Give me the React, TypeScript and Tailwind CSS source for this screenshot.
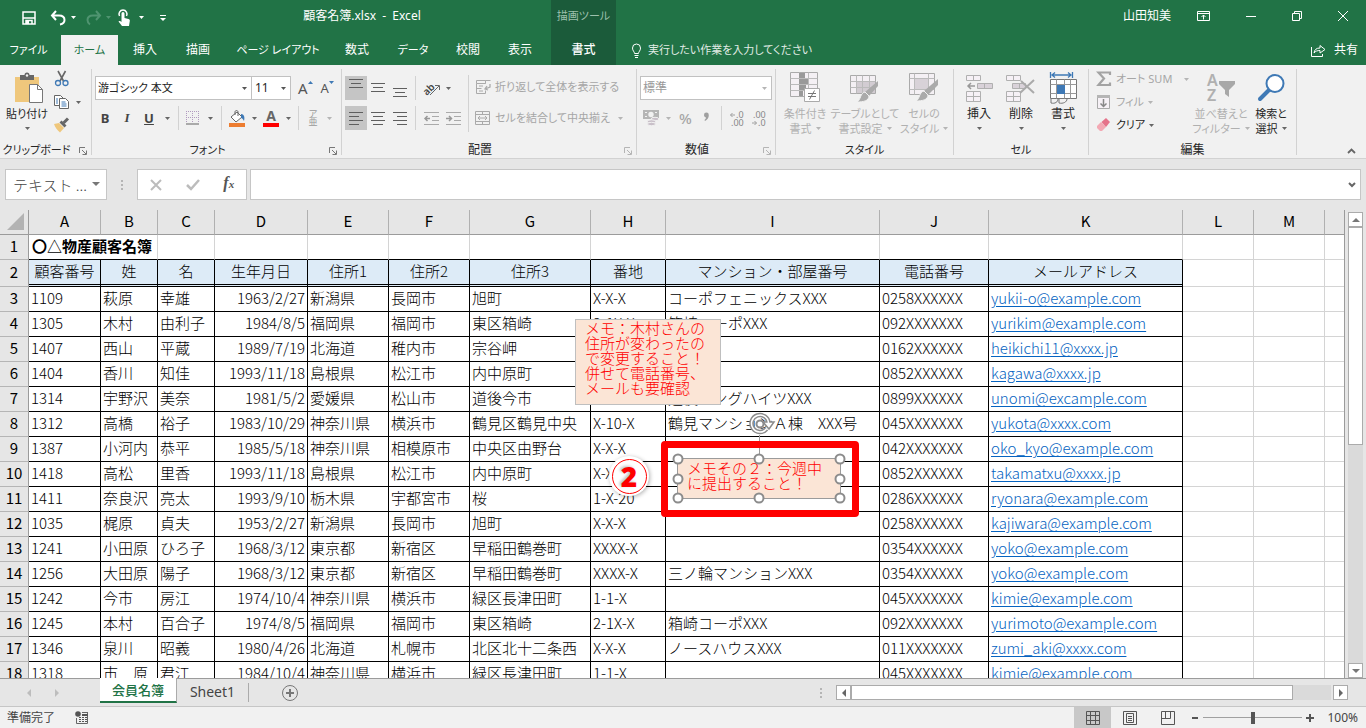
import React from 'react';

type IconProps = { w?: number; h?: number; children: React.ReactNode; className?: string };

function Icon({ w = 16, h = 16, children, className = '' }: IconProps) {
  return (
    <svg width={w} height={h} viewBox={`0 0 ${w} ${h}`} fill="none" aria-hidden="true" className={`shrink-0 overflow-visible ${className}`}>
      {children}
    </svg>
  );
}

function Arrow({ className = 'text-[#666666]' }: { className?: string }) {
  return (
    <Icon w={5} h={3} className={className}>
      <path d="M0 0h5L2.5 3z" fill="currentColor" />
    </Icon>
  );
}

function Launcher({ className }: { className: string }) {
  return (
    <button aria-label="オプション" className={`absolute right-1 bottom-0 ${className}`}>
      <Icon w={8} h={8}>
        <path d="M.5 6V.5H6M3 3l4 4M7.500 3.500v4h-4" stroke="currentColor" />
      </Icon>
    </button>
  );
}

type GroupProps = { label: string; className: string; labelSize?: string; launcher?: string; children: React.ReactNode };

function Group({ label, className, labelSize = 'text-[12px]', launcher, children }: GroupProps) {
  return (
    <section aria-label={label} className={`relative flex shrink-0 flex-col border-r border-[#d2d2d2] ${className}`}>
      <div className="flex min-h-0 flex-1">{children}</div>
      <div className={`flex h-[10px] items-center justify-center text-[#262626] ${labelSize}`}>{label}</div>
      {launcher && <Launcher className={launcher} />}
    </section>
  );
}

function Sep() {
  return <span className="mx-1 h-6 w-px shrink-0 bg-[#d2d2d2]" />;
}

type BigProps = { icon: React.ReactNode; lines: string[]; className: string; arrow?: string };

function BigButton({ icon, lines, className, arrow }: BigProps) {
  return (
    <button className={`flex shrink-0 flex-col items-center whitespace-nowrap ${className}`}>
      <span className="flex h-[37px] items-center">{icon}</span>
      {lines.map((line, i) => (
        <span key={line} className="flex h-[15px] items-center gap-1 leading-[15px]">
          {line}
          {i === 1 && <Arrow className={arrow} />}
        </span>
      ))}
      {lines.length === 1 && (
        <span className="flex h-[15px] items-center">
          <Arrow className={arrow} />
        </span>
      )}
    </button>
  );
}

function Lines({ d }: { d: string }) {
  return (
    <Icon w={16} h={18}>
      <path d={d} stroke="#5f5f5f" />
    </Icon>
  );
}

const TABS = [
  { name: 'ファイル', style: 'w-[61px] pr-1 text-[11px]' },
  { name: 'ホーム', style: 'w-[57px] bg-[#f1f1f1] text-[11px] text-[#217346]' },
  { name: '挿入', style: 'w-[54px] text-[12px]' },
  { name: '描画', style: 'w-[52px] text-[12px]' },
  { name: 'ページ レイアウト', style: 'w-[108px] text-[11px]' },
  { name: '数式', style: 'w-[50px] text-[12px]' },
  { name: 'データ', style: 'w-[62px] text-[11px]' },
  { name: '校閲', style: 'w-[48px] text-[12px]' },
  { name: '表示', style: 'w-[56px] text-[12px]' },
];

function Header() {
  return (
    <header className="grid shrink-0 grid-cols-[551px_65px_1fr] grid-rows-[35px_30px] bg-[#217346] text-white">
      <div className="flex items-center">
        <div className="flex w-[173px] items-center pl-[21px]">
          <button aria-label="上書き保存">
            <Icon>
              <path d="M2 2h12v12H2z" stroke="#fff" strokeWidth="1.500" />
              <path d="M2 8h12M5 14v-3.500h6V14" stroke="#fff" strokeWidth="1.500" />
              <path d="M5 11h3v3H5z" fill="#fff" />
            </Icon>
          </button>
          <button aria-label="元に戻す" className="ml-[13px] flex items-center gap-1">
            <Icon w={17}>
              <path d="M6 1L2 5.500L6 10M2.500 5.500H9c3.500 0 5.500 2 5.500 4.500S12.500 14 10 14.500" stroke="#fff" strokeWidth="2" />
            </Icon>
            <Arrow className="text-white" />
          </button>
          <button aria-label="やり直し" className="ml-[9px] flex items-center gap-1 text-[#4f9470]">
            <Icon w={17}>
              <path d="M11 1l4 4.500L11 10M14.500 5.500H8c-3.500 0-5.500 2-5.500 4.500s1 3.500 2.500 4.500" stroke="currentColor" strokeWidth="2" />
            </Icon>
            <Arrow className="text-[#4f9470]" />
          </button>
          <button aria-label="タッチ/マウス モードの切り替え" className="ml-[6px] flex items-center gap-[8px]">
            <Icon w={14} h={18}>
              <path d="M2.500 7A4 4 0 1 1 9.500 7" stroke="#fff" strokeWidth="1.500" />
              <path d="M4.500 4.500a1.500 1.500 0 0 1 3 0V9l4 1c1 .3 1.500 1 1.300 2l-.8 5H5L1.500 12.500c1-.8 2-.5 3 .5z" fill="#fff" />
            </Icon>
            <Arrow className="text-white" />
          </button>
          <button aria-label="クイック アクセスのカスタマイズ" className="ml-4">
            <Icon w={6} h={8}>
              <path d="M0 1.500h6" stroke="#fff" />
              <path d="M0 4h6L3 7z" fill="#fff" />
            </Icon>
          </button>
        </div>
        <h1 className="flex-1 pb-1 text-center text-[12px]">顧客名簿.xlsx&nbsp; -&nbsp; Excel</h1>
      </div>

      <div className="flex items-center justify-center bg-[#1b5b3a] pb-1 text-[11px] text-[#9dc0ad]">描画ツール</div>

      <div className="flex items-center justify-end pb-1">
        <span className="mr-[25px] text-[12px]">山田知美</span>
        <button aria-label="リボンの表示オプション" className="mr-[31px] w-4">
          <Icon>
            <path d="M1.500 3.500h12v9h-12zM1.500 5.500h12M7.500 11.500V7M5.500 9l2-2 2 2" stroke="#fff" />
          </Icon>
        </button>
        <button aria-label="最小化" className="mr-[30px] w-4">
          <Icon>
            <path d="M3 8.500h10" stroke="#fff" />
          </Icon>
        </button>
        <button aria-label="元に戻す(縮小)" className="mr-[30px] w-4">
          <Icon>
            <path d="M3.500 5.500h7v7h-7zM5.500 5.500v-2h7v7h-2" stroke="#fff" />
          </Icon>
        </button>
        <button aria-label="閉じる" className="mr-[15px] w-4">
          <Icon>
            <path d="M3 3l10 10M13 3L3 13" stroke="#fff" />
          </Icon>
        </button>
      </div>

      <nav className="flex">
        {TABS.map((tab) => (
          <button key={tab.name} className={`shrink-0 whitespace-nowrap ${tab.style}`}>
            {tab.name}
          </button>
        ))}
      </nav>
      <button className="bg-[#1b5b3a] text-[12px] font-medium">書式</button>
      <div className="flex items-center justify-between pr-2 pl-[14px]">
        <button className="flex items-center gap-[5px] text-[11px] text-[#e0ebe4]">
          <Icon w={13} h={15}>
            <path d="M4.500 10.500C4.500 8.500 2.500 8 2.500 5a4 4 0 0 1 8 0c0 3-2 3.500-2 5.500z" stroke="#fff" />
            <path d="M4.500 12.500h4M5 14.500h3" stroke="#fff" />
          </Icon>
          実行したい作業を入力してください
        </button>
        <button className="flex items-center gap-2 text-[12px]">
          <Icon>
            <path d="M1.500 5v9.500h11V12" stroke="#fff" />
            <path d="M4 11c.5-3.500 2.500-5 6-5V3.500L15 7.500l-5 3.500V8.500C7.500 8.500 5.500 9 4 11z" stroke="#fff" />
          </Icon>
          共有
        </button>
      </div>
    </header>
  );
}

function ClipboardGroup() {
  return (
    <Group label="クリップボード" className="w-[92px]" labelSize="pr-[18px] text-[11px]" launcher="text-[#777777]">
      <BigButton
        className="ml-[5px] w-11 text-[11px] text-[#262626]"
        lines={['貼り付け']}
        icon={
          <Icon w={30} h={32} className="ml-1">
            <path d="M1 5h24v25H1z" fill="#efc77c" />
            <path d="M6 3h4.500a2.500 2.500 0 0 1 5 0H20v5H6z" fill="#666" />
            <circle cx="13" cy="3.500" r="1.200" fill="#f1f1f1" />
            <path d="M15.500 12.500h8l5 5v13h-13z" fill="#fff" stroke="#777" />
            <path d="M23.500 12.500v5h5" stroke="#777" />
          </Icon>
        }
      />
      <div className="ml-[5px] flex flex-col gap-[7px] pt-[2px]">
        <button aria-label="切り取り">
          <Icon>
            <path d="M4 0l5.500 10M11.500 0L6 10" stroke="#666" strokeWidth="1.600" />
            <circle cx="4" cy="12" r="2.500" stroke="#3f79b5" strokeWidth="1.300" />
            <circle cx="11.500" cy="12" r="2.500" stroke="#3f79b5" strokeWidth="1.300" />
          </Icon>
        </button>
        <button aria-label="コピー" className="flex items-center gap-[6px]">
          <Icon>
            <path d="M.5 1.500h6l3 3v7h-9z" fill="#fff" stroke="#666" />
            <path d="M5.500 4.500h6l3 3v7h-9z" fill="#fff" stroke="#666" />
            <path d="M2 5h2M2 7h2M2 9h2M7.500 8h4M7.500 10h5M7.500 12h5" stroke="#3f79b5" />
          </Icon>
          <Arrow />
        </button>
        <button aria-label="書式のコピー/貼り付け">
          <Icon>
            <path d="M0 7l5-1 5 5-4 4.500C3 13 1 10 0 7z" fill="#efc77c" />
            <path d="M5.500 5.500l2-2 5 5-2 2z" fill="#666" />
            <path d="M9.500 6L14 1.500" stroke="#666" strokeWidth="3" />
          </Icon>
        </button>
      </div>
    </Group>
  );
}

function FontGroup() {
  const small = 'flex h-6 shrink-0 items-center justify-center';
  return (
    <Group label="フォント" className="w-[250px]" labelSize="pr-[18px] text-[11px]" launcher="text-[#777777]">
      <div className="flex flex-1 flex-col gap-[6px] pt-[7px] pl-[3px]">
        <div className="flex items-center">
          <label className="relative flex h-6 w-[157px] border border-[#c1c1c1] bg-white">
            <select aria-label="フォント" className="w-full appearance-none bg-transparent pl-[2px] text-[11px] text-[#262626]">
              <option>游ゴシック 本文</option>
            </select>
            <Arrow className="absolute top-[10px] right-1 text-[#555555]" />
          </label>
          <label className="relative -ml-px flex h-6 w-10 border border-[#c1c1c1] bg-white">
            <select aria-label="フォント サイズ" className="w-full appearance-none bg-transparent pl-[3px] text-[12px] text-[#262626]">
              <option>11</option>
            </select>
            <Arrow className="absolute top-[10px] right-1 text-[#555555]" />
          </label>
          <button aria-label="フォント サイズの拡大" className="ml-[7px] flex items-start text-[15px] leading-4 text-[#555555]">
            A
            <Icon w={5} h={4}>
              <path d="M0 4h5L2.500 1z" fill="#3f79b5" />
            </Icon>
          </button>
          <button aria-label="フォント サイズの縮小" className="ml-2 flex items-start text-[13px] leading-4 text-[#555555]">
            A
            <Icon w={5} h={4}>
              <path d="M0 1h5L2.500 4z" fill="#3f79b5" />
            </Icon>
          </button>
        </div>
        <div className="-ml-px flex items-center text-[13px] text-[#444444]">
          <button className={`${small} w-[22px] font-bold`}>B</button>
          <button className={`${small} w-[22px] font-['Liberation_Serif',serif] font-bold italic`}>I</button>
          <button className={`${small} w-[22px] font-bold underline`}>U</button>
          <button aria-label="下線" className={`${small} w-[14px]`}><Arrow /></button>
          <Sep />
          <button aria-label="罫線" className={`${small} w-5`}>
            <Icon w={14} h={14}>
              <path d="M.5 0v13M6.500 0v13M12.500 0v13M0 .5h13M0 6.500h13" stroke="#b19abf" strokeDasharray="1 1" />
              <path d="M0 13h13" stroke="#aaa" strokeWidth="2" />
            </Icon>
          </button>
          <button aria-label="罫線の種類" className={`${small} w-[14px]`}><Arrow /></button>
          <Sep />
          <button aria-label="塗りつぶしの色" className={`${small} w-[22px]`}>
            <Icon w={17} h={17}>
              <path d="M2 7l6-5 5 5-6 5z" fill="#fff" stroke="#666" />
              <path d="M6 5V2c0-2 3-2 3 0v4" stroke="#666" />
              <path d="M12 4c3 0 4 3 3 7-1-2-2-3-3-3z" fill="#3f79b5" />
              <path d="M0 13h16v4H0z" fill="#ed7d31" />
            </Icon>
          </button>
          <button aria-label="塗りつぶしの種類" className={`${small} w-3`}><Arrow /></button>
          <button aria-label="フォントの色" className={`${small} w-[22px]`}>
            <span className="flex h-[17px] w-4 items-center justify-center border-b-4 border-[#ff0000] text-[14px] leading-3 font-bold text-[#666666]">A</span>
          </button>
          <button aria-label="フォントの色の種類" className={`${small} w-3`}><Arrow /></button>
          <Sep />
          <button aria-label="ふりがな" className={`${small} w-5 flex-col text-[9px] leading-[8px] text-[#999999]`}>
            <span>ア</span>
            <span>亜</span>
          </button>
          <button aria-label="ふりがなの設定" className={`${small} w-3`}><Arrow className="text-[#b5b5b5]" /></button>
        </div>
      </div>
    </Group>
  );
}

function AlignGroup() {
  const cell = 'flex h-6 w-[22px] shrink-0 items-center justify-center';
  return (
    <Group label="配置" className="w-[295px]" labelSize="pr-[18px] text-[12px]" launcher="text-[#b5b5b5]">
      <div className="flex flex-col gap-[6px] pt-[7px] pl-[3px]">
        <div className="flex items-center">
          <button aria-label="上揃え" className={`${cell} bg-[#c5c5c5]`}><Lines d="M1 .5h14M3 4.500h10M1 8.500h14" /></button>
          <button aria-label="上下中央揃え" className={cell}><Lines d="M1 4.500h14M3 8.500h10M1 12.500h14" /></button>
          <button aria-label="下揃え" className={cell}><Lines d="M1 9.500h14M3 13.500h10M1 17.500h14" /></button>
          <Sep />
          <button aria-label="方向" className="flex items-center gap-1 pl-1">
            <Icon w={18} h={16}>
              <text x="-1" y="11" fontSize="10" fontWeight="600" fill="#444" transform="rotate(-45 7 9)">ab</text>
              <path d="M6 15L15 6M11 5.500h4.500V10" stroke="#666" />
            </Icon>
            <Arrow />
          </button>
        </div>
        <div className="flex items-center">
          <button aria-label="左揃え" className={`${cell} bg-[#c5c5c5]`}><Lines d="M1 3.500h14M1 7.500h10M1 11.500h14M1 15.500h10" /></button>
          <button aria-label="中央揃え" className={cell}><Lines d="M1 3.500h14M3 7.500h10M1 11.500h14M3 15.500h10" /></button>
          <button aria-label="右揃え" className={cell}><Lines d="M1 3.500h14M5 7.500h10M1 11.500h14M5 15.500h10" /></button>
          <Sep />
          <button aria-label="インデントを減らす" className={cell}>
            <Icon w={17}>
              <path d="M1 2.500h15M9 6.500h7M9 10.500h7M1 14.500h15" stroke="#aaa" />
              <path d="M7 8.500H2M4.500 6L2 8.500 4.500 11" stroke="#999" strokeWidth="1.500" />
            </Icon>
          </button>
          <button aria-label="インデントを増やす" className={cell}>
            <Icon w={17}>
              <path d="M1 2.500h15M9 6.500h7M9 10.500h7M1 14.500h15" stroke="#aaa" />
              <path d="M1 8.500h5M4 6l2.500 2.500L4 11" stroke="#999" strokeWidth="1.500" />
            </Icon>
          </button>
        </div>
      </div>
      <div className="mt-[6px] ml-1 flex flex-1 flex-col gap-[7px] self-start border-l border-[#d2d2d2] pb-[2px] pl-[6px] text-[11px] whitespace-nowrap text-[#a6a6a6]">
        <button className="flex h-6 items-center gap-1">
          <Icon>
            <path d="M1.500 1.500h9v3h-9zM1.500 4.500v10M1.500 14.500h9v-3M1.500 9.500h5M10.500 4.500v-3h5M4 7h4M4 12h4" stroke="#aaa" />
            <path d="M15 5v3l-5 2M12 7l-2 3 3 1" stroke="#aaa" strokeWidth="1.300" />
          </Icon>
          折り返して全体を表示する
        </button>
        <button className="flex h-6 items-center gap-1">
          <Icon>
            <path d="M.5 1.500h14v13H.5zM.5 4.500h14M.5 11.500h14M7.500 1.500v3M7.500 11.500v3M3 8h9M5 6L3 8l2 2M10 6l2 2-2 2" stroke="#aaa" />
          </Icon>
          セルを結合して中央揃え
          <Arrow className="ml-1 text-[#b5b5b5]" />
        </button>
      </div>
    </Group>
  );
}

function NumberGroup() {
  return (
    <Group label="数値" className="w-[139px]" labelSize="pr-[18px] text-[12px]" launcher="text-[#b5b5b5]">
      <div className="flex flex-1 flex-col gap-[6px] px-[3px] pt-[7px]">
        <label className="relative flex h-6 border border-[#c1c1c1] bg-white">
          <select aria-label="表示形式" className="w-full appearance-none bg-transparent pl-[2px] text-[12px] text-[#999999]">
            <option>標準</option>
          </select>
          <Arrow className="absolute top-[10px] right-1 text-[#b5b5b5]" />
        </label>
        <div className="flex h-6 items-center text-[#a6a6a6]">
          <button aria-label="通貨表示形式" className="ml-[3px] flex items-center gap-[6px]">
            <Icon w={17}>
              <path d="M0 0h16v9H0z" fill="#b5b5b5" />
              <circle cx="8" cy="4.500" r="2.700" fill="#f1f1f1" />
              <path d="M2 2h2v1H2zM12 2h2v1h-2zM2 6h2v1H2z" fill="#f1f1f1" />
              <ellipse cx="12" cy="9" rx="4" ry="1.700" fill="#c9c0c9" stroke="#f1f1f1" />
              <ellipse cx="8.500" cy="11.500" rx="4" ry="1.700" fill="#c9c0c9" stroke="#f1f1f1" />
              <ellipse cx="8.500" cy="14" rx="4" ry="1.700" fill="#c9c0c9" stroke="#f1f1f1" />
            </Icon>
            <Arrow className="text-[#b5b5b5]" />
          </button>
          <button className="ml-2 text-[15px] font-medium">%</button>
          <button aria-label="桁区切りスタイル" className="mr-2 ml-3">
            <Icon w={5} h={10}>
              <path d="M0 2a2.200 2.200 0 0 1 4.800 0C5 5 3 7 1 8l-.5-1C1.500 6 2 5.500 2 4.500 1 4.500 0 3.500 0 2z" fill="#a0a0a0" />
            </Icon>
          </button>
          <Sep />
          <button aria-label="小数点以下の表示桁数を増やす" className="ml-[3px]">
            <Icon w={16} h={16}>
              <path d="M6 5H1.500M3.500 3l-2 2 2 2" stroke="#a0a0a0" />
              <text x="7" y="8" fontSize="9" fill="#888">.0</text>
              <text x="2" y="16" fontSize="9" fill="#888">.00</text>
            </Icon>
          </button>
          <button aria-label="小数点以下の表示桁数を減らす" className="ml-[6px]">
            <Icon w={16} h={16}>
              <text x="2" y="8" fontSize="9" fill="#888">.00</text>
              <path d="M1 13h4.500M3.500 11l2 2-2 2" stroke="#a0a0a0" />
              <text x="7" y="16" fontSize="9" fill="#888">.0</text>
            </Icon>
          </button>
        </div>
      </div>
    </Group>
  );
}

function StyleGroup() {
  return (
    <Group label="スタイル" className="w-[178px]" labelSize="text-[11px]">
      <div className="flex text-[11px] text-[#b0b0b0]">
        <BigButton
          className="w-[58px]"
          lines={['条件付き', '書式']}
          arrow="text-[#b5b5b5]"
          icon={
            <Icon w={30} h={31}>
              <path d="M.5.5h27v24H.5z" fill="#f4f0f4" stroke="#aaa" />
              <path d="M.5 6.500h27M.5 12.500h27M.5 18.500h27M9.500.5v24M18.500.5v24" stroke="#bbb" />
              <path d="M9 1h6v5H9zM9 7h9v5H9zM9 13h7v5H9zM9 19h4v5H9z" fill="#999" />
              <path d="M14.500 16.500h15v13h-15z" fill="#fff" stroke="#aaa" />
              <path d="M18 21.500h8M18 24.500h8M24.500 18.500l-5 9" stroke="#777" />
            </Icon>
          }
        />
        <BigButton
          className="w-[62px]"
          lines={['テーブルとして', '書式設定']}
          arrow="text-[#b5b5b5]"
          icon={
            <Icon w={30} h={30}>
              <path d="M.5 2.500h25v18H.5z" fill="#f4f0f4" stroke="#aaa" />
              <path d="M7 8h18v12H7z" fill="#d2ccd2" />
              <path d="M.5 8.500h25M.5 14.500h25M6.500 2.500v18M12.500 2.500v18M19.500 2.500v18" stroke="#bbb" />
              <path d="M28 8v5l-9 10-4-4z" fill="#aaa" />
              <path d="M15 19l4 4c0 5-6 6-12 6 4-2 3-9 8-10z" fill="#aaa" stroke="#f1f1f1" />
            </Icon>
          }
        />
        <BigButton
          className="w-[56px]"
          lines={['セルの', 'スタイル']}
          arrow="text-[#b5b5b5]"
          icon={
            <Icon w={30} h={30}>
              <path d="M.5.5h25v21H.5z" fill="#f4f0f4" stroke="#aaa" />
              <path d="M5.500.5v21M19.500.5v21M.5 5.500h25M.5 16.500h25" stroke="#bbb" />
              <path d="M6 6h13v10H6z" fill="#d8d2d8" />
              <path d="M29 6v6L19 22l-4-4z" fill="#aaa" />
              <path d="M15 18l4 4c0 5-6 6-12 6 4-2 3-9 8-10z" fill="#aaa" stroke="#f1f1f1" />
            </Icon>
          }
        />
      </div>
    </Group>
  );
}

function CellGroup() {
  return (
    <Group label="セル" className="w-[135px]" labelSize="text-[11px]">
      <div className="flex pl-1 text-[12px] text-[#262626]">
        <BigButton
          className="w-[42px]"
          lines={['挿入']}
          icon={
            <Icon w={27} h={28}>
              <path d="M.5 1.500h14v5H.5zM7.500 1.500v5M.5 17.500h14v10H.5zM.5 22.500h14M7.500 17.500v10" fill="#f6f1f6" stroke="#b0b0b0" />
              <path d="M11.500 9.500h15v5h-15zM18.500 9.500v5" fill="#d9d2d9" stroke="#b0b0b0" />
              <path d="M9 12H2M5 9l-3 3 3 3" stroke="#999" strokeWidth="1.500" />
            </Icon>
          }
        />
        <BigButton
          className="w-[42px]"
          lines={['削除']}
          icon={
            <Icon w={30} h={28}>
              <path d="M.5 1.500h14v5H.5zM7.500 1.500v5M.5 17.500h14v10H.5zM.5 22.500h14M7.500 17.500v10" fill="#f6f1f6" stroke="#b0b0b0" />
              <path d="M6.500 9.500h13v5h-13zM13.500 9.500v5" fill="#d9d2d9" stroke="#b0b0b0" />
              <path d="M15 7l13 12M28 6L14 19" stroke="#aaa" strokeWidth="2" />
            </Icon>
          }
        />
        <BigButton
          className="w-[42px]"
          lines={['書式']}
          icon={
            <Icon w={29} h={32}>
              <path d="M1.500 0v6M23.500 0v6M3 3h19M6 .5L3 3l3 2.500M19 .5L22 3l-3 2.500" stroke="#3f79b5" strokeWidth="1.300" />
              <path d="M1.500 7.500h26v19h-26z" fill="#fff" stroke="#777" />
              <path d="M1.500 12.500h26M1.500 21.500h26M7.500 7.500v19M15.500 7.500v19M21.500 7.500v19" stroke="#999" />
              <path d="M8 13h8v9H8z" fill="#3f79b5" />
              <path d="M2 27v4c4 1 7-1 7-4M10 27v4c4 1 8-1 8-4" stroke="#777" />
            </Icon>
          }
        />
      </div>
    </Group>
  );
}

function EditGroup() {
  return (
    <Group label="編集" className="w-[208px]">
      <div className="flex w-[106px] shrink-0 flex-col gap-[3px] pl-[7px] text-[11px] whitespace-nowrap text-[#a6a6a6]">
        <button className="flex h-5 items-center gap-1">
          <Icon>
            <path d="M14 4V1.500H2.500L8 7.500 2.500 14H14v-2.500" stroke="#a3a3a3" strokeWidth="2.200" />
          </Icon>
          <span className="mr-2">オート SUM</span>
          <Arrow className="text-[#b5b5b5]" />
        </button>
        <button className="flex h-5 items-center gap-1">
          <Icon>
            <path d="M1.500 1.500h12v13h-12z" fill="#f6f1f6" stroke="#aaa" />
            <path d="M1 1h13v3H1z" fill="#b5b5b5" />
            <path d="M7.500 5v7M4.500 9.500l3 3 3-3" stroke="#888" strokeWidth="1.500" />
          </Icon>
          フィル
          <Arrow className="text-[#b5b5b5]" />
        </button>
        <button className="flex h-5 items-center gap-1 text-[#262626]">
          <Icon>
            <path d="M1 9l4-4 5 5-4 4H4L1 11z" fill="#f3a9b4" />
            <path d="M5.500 5L10 1l4 4-4 5z" fill="#e5738a" />
          </Icon>
          クリア
          <Arrow />
        </button>
      </div>
      <BigButton
        className="w-[52px] text-[11px] text-[#b0b0b0]"
        lines={['並べ替えと', 'フィルター']}
        arrow="text-[#b5b5b5]"
        icon={
          <Icon w={30} h={29}>
            <text x="1" y="13" fontSize="16" fontWeight="600" fill="#b0b0b0">A</text>
            <text x="1" y="28" fontSize="16" fontWeight="600" fill="#b0b0b0">Z</text>
            <path d="M13 8h16v3l-6 6v7l-4-3v-4l-6-6z" fill="#a8a8a8" />
          </Icon>
        }
      />
      <BigButton
        className="w-[48px] text-[11px] text-[#262626]"
        lines={['検索と', '選択']}
        icon={
          <Icon w={29} h={29}>
            <circle cx="18" cy="10.500" r="8.500" fill="#fff" stroke="#3f79b5" strokeWidth="2" />
            <path d="M11.500 17.500L3 26" stroke="#3f79b5" strokeWidth="4" strokeLinecap="round" />
          </Icon>
        }
      />
    </Group>
  );
}

function FormulaBar() {
  return (
    <div className="flex h-[51px] shrink-0 items-start px-[5px] pt-[10px]">
      <label className="relative flex h-[31px] w-[102px] items-center border border-[#c6c6c6] bg-white">
        <input aria-label="名前ボックス" defaultValue="テキスト ..." className="w-full bg-transparent pl-[7px] font-['Noto_Sans_CJK_JP',sans-serif] text-[15px] font-light text-[#444444] [font-feature-settings:normal]" />
        <Icon w={8} h={4} className="absolute top-3 right-[6px]">
          <path d="M0 0h8L4 4z" fill="#777" />
        </Icon>
      </label>
      <span className="flex h-[31px] w-[30px] flex-col items-center justify-center gap-[2px]">
        <i className="size-[2px] bg-[#b5b5b5]" />
        <i className="size-[2px] bg-[#b5b5b5]" />
        <i className="size-[2px] bg-[#b5b5b5]" />
      </span>
      <div className="flex h-[31px] w-[110px] items-center justify-around border border-[#c6c6c6] bg-white">
        <button aria-label="キャンセル">
          <Icon w={12} h={12}>
            <path d="M1 1l10 10M11 1L1 11" stroke="#bcbcbc" strokeWidth="2" />
          </Icon>
        </button>
        <button aria-label="入力">
          <Icon w={14} h={12}>
            <path d="M1 6l4 4 8-9" stroke="#bcbcbc" strokeWidth="2.500" />
          </Icon>
        </button>
        <button aria-label="関数の挿入" className="pb-[2px] font-['Liberation_Serif',serif] text-[16px] font-bold text-[#555555] italic">
          f<span className="text-[11px]">x</span>
        </button>
      </div>
      <label className="relative ml-[3px] flex h-[31px] flex-1 border border-[#c6c6c6] bg-white">
        <input aria-label="数式バー" className="w-full bg-transparent px-2 text-[14px]" />
        <Icon w={8} h={6} className="absolute top-3 right-1">
          <path d="M1 1l3 3 3-3" stroke="#666" strokeWidth="2" />
        </Icon>
      </label>
    </div>
  );
}

const COLUMNS = [
  { name: 'A', width: 'w-[72px]' },
  { name: 'B', width: 'w-[57px]' },
  { name: 'C', width: 'w-[57px]' },
  { name: 'D', width: 'w-[93px]' },
  { name: 'E', width: 'w-[81px]' },
  { name: 'F', width: 'w-[81px]' },
  { name: 'G', width: 'w-[121px]' },
  { name: 'H', width: 'w-[75px]' },
  { name: 'I', width: 'w-[214px]' },
  { name: 'J', width: 'w-[109px]' },
  { name: 'K', width: 'w-[194px]' },
  { name: 'L', width: 'w-[71px]' },
  { name: 'M', width: 'w-[71px]' },
];

const TITLES = ['顧客番号', '姓', '名', '生年月日', '住所1', '住所2', '住所3', '番地', 'マンション・部屋番号', '電話番号', 'メールアドレス'];

const ROWS = [
  ['1109', '萩原', '幸雄', '1963/2/27', '新潟県', '長岡市', '旭町', 'X-X-X', 'コーポフェニックスXXX', '0258XXXXXX', 'yukii-o@example.com'],
  ['1305', '木村', '由利子', '1984/8/5', '福岡県', '福岡市', '東区箱崎', '2-1X-X', '箱崎コーポXXX', '092XXXXXXX', 'yurikim@example.com'],
  ['1407', '西山', '平蔵', '1989/7/19', '北海道', '稚内市', '宗谷岬', '', '', '0162XXXXXX', 'heikichi11@xxxx.jp'],
  ['1404', '香川', '知佳', '1993/11/18', '島根県', '松江市', '内中原町', '', '', '0852XXXXXX', 'kagawa@xxxx.jp'],
  ['1314', '宇野沢', '美奈', '1981/5/2', '愛媛県', '松山市', '道後今市', '', '道後キングハイツXXX', '0899XXXXXX', 'unomi@excample.com'],
  ['1312', '高橋', '裕子', '1983/10/29', '神奈川県', '横浜市', '鶴見区鶴見中央', 'X-10-X', '鶴見マンションＡ棟　XXX号', '045XXXXXXX', 'yukota@xxxx.com'],
  ['1387', '小河内', '恭平', '1985/5/18', '神奈川県', '相模原市', '中央区由野台', 'X-X-X', '', '042XXXXXXX', 'oko_kyo@example.com'],
  ['1418', '高松', '里香', '1993/11/18', '島根県', '松江市', '内中原町', 'X-X-X', '', '0852XXXXXX', 'takamatxu@xxxx.jp'],
  ['1411', '奈良沢', '亮太', '1993/9/10', '栃木県', '宇都宮市', '桜', '1-X-20', '', '0286XXXXXX', 'ryonara@example.com'],
  ['1035', '梶原', '貞夫', '1953/2/27', '新潟県', '長岡市', '旭町', 'X-X-X', '', '0258XXXXXX', 'kajiwara@example.com'],
  ['1241', '小田原', 'ひろ子', '1968/3/12', '東京都', '新宿区', '早稲田鶴巻町', 'XXXX-X', '', '0354XXXXXX', 'yoko@example.com'],
  ['1256', '大田原', '陽子', '1968/3/12', '東京都', '新宿区', '早稲田鶴巻町', 'XXXX-X', '三ノ輪マンションXXX', '0354XXXXXX', 'yoko@example.com'],
  ['1242', '今市', '房江', '1974/10/4', '神奈川県', '横浜市', '緑区長津田町', '1-1-X', '', '045XXXXXXX', 'kimie@example.com'],
  ['1245', '本村', '百合子', '1974/8/5', '福岡県', '福岡市', '東区箱崎', '2-1X-X', '箱崎コーポXXX', '092XXXXXXX', 'yurimoto@example.com'],
  ['1346', '泉川', '昭義', '1980/4/26', '北海道', '札幌市', '北区北十二条西', 'X-X-X', 'ノースハウスXXX', '011XXXXXXX', 'zumi_aki@xxxx.com'],
  ['1318', '市　原', '君江', '1984/10/4', '神奈川県', '横浜市', '緑区長津田町', '1-1-X', '', '045XXXXXXX', 'kimie@example.com'],
];

const GRID = 'border-r border-b border-[#d4d4d4]';
const ROW_HEAD = 'border-r border-b border-r-[#9b9b9b] border-b-[#b5b5b5] bg-[#e6e6e6] font-normal';

function Blank() {
  return (
    <>
      <td className={GRID} />
      <td className={GRID} />
      <td className="border-b border-[#d4d4d4]" />
    </>
  );
}

function SheetTable() {
  return (
    <table className="w-full table-fixed border-separate border-spacing-0 bg-white text-[15px] leading-5 font-light whitespace-nowrap text-black [&_td]:pb-[2px] [&_th]:pb-[2px]">
      <thead>
        <tr className="h-[25px] bg-[#e6e6e6]">
          <th className="w-[29px] border-r border-b border-[#9b9b9b]">
            <Icon w={17} h={17} className="ml-[7px]">
              <path d="M17 0v17H0z" fill="#b3b3b3" />
            </Icon>
          </th>
          {COLUMNS.map((col) => (
            <th key={col.name} className={`border-r border-b border-r-[#b0b0b0] border-b-[#9b9b9b] p-0 font-normal ${col.width}`}>
              {col.name}
            </th>
          ))}
          <th className="border-b border-[#9b9b9b]" />
        </tr>
      </thead>
      <tbody>
        <tr className="h-[25px]">
          <th className={ROW_HEAD}>1</th>
          <td colSpan={2} className="border-r border-b border-r-[#d4d4d4] border-b-black px-[3px] py-0 font-bold">〇△物産顧客名簿</td>
          {TITLES.slice(2).map((title) => (
            <td key={title} className="border-r border-b border-r-[#d4d4d4] border-b-black" />
          ))}
          <Blank />
        </tr>
        <tr className="h-[27px]">
          <th className={ROW_HEAD}>2</th>
          {TITLES.map((title) => (
            <td key={title} className="border-r border-b-3 border-r-black border-b-black bg-[#ddebf7] p-0 text-center [border-bottom-style:double]">
              {title}
            </td>
          ))}
          <Blank />
        </tr>
        {ROWS.map((row, r) => (
          <tr key={row[0]} className="h-[25px]">
            <th className={ROW_HEAD}>{r + 3}</th>
            {row.map((value, c) => (
              <td key={c} className={`border-r border-b border-black px-[2px] py-0 ${c === 3 ? 'text-right' : ''}`}>
                {c === 10 ? (
                  <a href={`mailto:${value}`} className="text-[#0563c1] underline underline-offset-2">{value}</a>
                ) : (
                  value
                )}
              </td>
            ))}
            <Blank />
          </tr>
        ))}
      </tbody>
    </table>
  );
}

const HANDLES = [
  'top-0 left-0',
  'top-0 left-1/2',
  'top-0 left-full',
  'top-1/2 left-0',
  'top-1/2 left-full',
  'top-full left-0',
  'top-full left-1/2',
  'top-full left-full',
];

function Memos() {
  return (
    <>
      <p className="absolute top-[109px] left-[575px] h-[86px] w-[146px] border border-[#bfbfbf] bg-[#fbe5d6] pl-[9px] text-[15px] leading-[15px] font-light text-[#ff0000]">
        メモ：木村さんの<br />住所が変わったの<br />で変更すること！<br />併せて電話番号、<br />メールも要確認
      </p>

      {/* 選択中のテキスト ボックス */}
      <div className="absolute top-[248px] left-[677px] h-[41px] w-[164px] border border-[#9b9b9b] bg-[#fbe5d6] pt-px pl-[9px] text-[15px] leading-[15px] font-light text-[#ff0000]">
        メモその２：今週中<br />に提出すること！
        <span className="absolute bottom-full left-1/2 h-6 w-px bg-[#9b9b9b]" />
        {HANDLES.map((place) => (
          <span key={place} className={`absolute size-[11px] -translate-1/2 rounded-full border-2 border-[#8c8c8c] bg-white ${place}`} />
        ))}
        <Icon w={28} h={24} className="absolute bottom-[62px] left-[70px]">
          <path d="M18.500 17A8.500 8.500 0 1 1 20.500 11" stroke="#8c8c8c" strokeWidth="4.500" />
          <path d="M15 10h11l-5 7z" fill="#fff" stroke="#8c8c8c" strokeWidth="1.500" />
          <path d="M18.500 17A8.500 8.500 0 1 1 20.500 11" stroke="#fff" strokeWidth="1.500" />
          <circle cx="12" cy="12" r="3.500" stroke="#8c8c8c" strokeWidth="2" />
        </Icon>
      </div>

      <div className="absolute top-[231px] left-[661px] h-[76px] w-[198px] rounded-[4px] border-[7px] border-[#ff0000]" />
      <div className="absolute top-[246px] left-[609px] flex size-10 items-center justify-center rounded-full bg-white shadow-[1px_1px_4px_rgba(0,0,0,0.3)]">
        <span className="flex size-[35px] items-center justify-center rounded-full border-[1px] border-[#ff0000] font-['Noto_Sans',sans-serif] text-[28px] leading-none font-black text-[#ff0000] [text-shadow:-2px_-1px_3px_rgba(0,0,0,0.25)]">
          2
        </span>
      </div>
    </>
  );
}

function VerticalScroll() {
  return (
    <div className="flex w-[21px] shrink-0 flex-col px-[3px] pt-[2px]">
      <button aria-label="上へ" className="flex h-[15px] items-center justify-center border border-[#ababab] bg-white">
        <Icon w={8} h={4}><path d="M0 4h8L4 0z" fill="#777" /></Icon>
      </button>
      <div className="min-h-0 flex-1 bg-[#dadada]">
        <div className="h-1/2 border border-[#ababab] bg-white" />
      </div>
      <button aria-label="下へ" className="flex h-[15px] items-center justify-center border border-[#ababab] bg-white">
        <Icon w={8} h={4}><path d="M0 0h8L4 4z" fill="#777" /></Icon>
      </button>
    </div>
  );
}

function SheetTabs() {
  return (
    <div className="flex h-7 shrink-0 border-t border-[#9b9b9b] text-[13px]">
      <div className="flex w-[100px] items-center gap-6 pl-[27px]">
        <button aria-label="前のシート"><Icon w={4} h={8}><path d="M4 0v8L0 4z" fill="#bdbdbd" /></Icon></button>
        <button aria-label="次のシート"><Icon w={4} h={8}><path d="M0 0v8l4-4z" fill="#bdbdbd" /></Icon></button>
      </div>
      <button className="-mt-px h-[25px] w-[77px] border-r border-b-2 border-r-[#ababab] border-b-[#217346] bg-white font-medium text-[#217346]">会員名簿</button>
      <button className="my-1 w-[72px] border-r border-[#ababab] pb-[2px] text-[14px] text-[#444444]">Sheet1</button>
      <button aria-label="新しいシート" className="ml-8">
        <Icon w={18} h={18}>
          <circle cx="9" cy="9" r="7.500" stroke="#777" />
          <path d="M5 9h8M9 5v8" stroke="#777" strokeWidth="2" />
        </Icon>
      </button>
      <div className="ml-auto flex w-[528px] items-center">
        <span className="flex w-4 shrink-0 flex-col gap-[2px]">
          <i className="size-[2px] bg-[#b5b5b5]" />
          <i className="size-[2px] bg-[#b5b5b5]" />
          <i className="size-[2px] bg-[#b5b5b5]" />
        </span>
        <button aria-label="左へ" className="flex h-[15px] w-[15px] shrink-0 items-center justify-center border border-[#ababab] bg-white">
          <Icon w={4} h={8}><path d="M4 0v8L0 4z" fill="#666" /></Icon>
        </button>
        <div className="h-[15px] flex-1 bg-[#dadada]">
          <div className="h-full w-[92%] border border-[#ababab] bg-white" />
        </div>
        <button aria-label="右へ" className="ml-[2px] flex h-[15px] w-[15px] shrink-0 items-center justify-center border border-[#ababab] bg-white">
          <Icon w={4} h={8}><path d="M0 0v8l4-4z" fill="#666" /></Icon>
        </button>
      </div>
      <span className="w-[18px]" />
    </div>
  );
}

function StatusBar() {
  return (
    <footer className="flex h-[22px] shrink-0 items-center border-t border-[#c6c6c6] bg-[#f1f1f1] text-[12px] text-[#444444]">
      <span className="ml-[7px]">準備完了</span>
      <Icon w={14} h={14} className="ml-5">
        <circle cx="3" cy="3" r="2.800" fill="#555" />
        <path d="M7 1.500h6M1.500 7v5.500h11V1.500" stroke="#666" />
        <path d="M7 3h6v2H7zM4 6h2v1H4zM7 6h2v1H7zM10 6h2v1h-2zM4 8h2v1H4zM7 8h2v1H7zM10 8h2v1h-2zM4 10h2v1H4zM7 10h2v1H7zM10 10h2v1h-2z" fill="#555" />
      </Icon>
      <div className="ml-auto flex h-full">
        <button aria-label="標準" className="flex w-[37px] items-center justify-center bg-[#c8c8c8]">
          <Icon w={14} h={14}><path d="M.5.5h13v13H.5zM.5 4.500h13M.5 9.500h13M4.500.5v13M9.500.5v13" stroke="#555" /></Icon>
        </button>
        <button aria-label="ページ レイアウト" className="flex w-[38px] items-center justify-center">
          <Icon w={14} h={14}><path d="M.5.5h13v13H.5zM3.500 2.500h7v9h-7zM5 5.500h4M5 7.500h4M5 9.500h4" stroke="#555" /></Icon>
        </button>
        <button aria-label="改ページ プレビュー" className="flex w-[38px] items-center justify-center">
          <Icon w={14} h={14}><path d="M.5.5h13v13H.5zM4.500.5v7M9.500.5v7M.5 7.500h9" stroke="#555" /></Icon>
        </button>
      </div>
      <button aria-label="縮小" className="ml-1"><Icon w={8} h={8}><path d="M1 4h6" stroke="#555" strokeWidth="2" /></Icon></button>
      <input
        type="range"
        aria-label="ズーム"
        defaultValue={50}
        className="mx-1 h-3 w-[99px] appearance-none bg-[linear-gradient(#a0a0a0,#a0a0a0)] bg-[length:100%_1px] bg-center bg-no-repeat [&::-webkit-slider-thumb]:h-3 [&::-webkit-slider-thumb]:w-1 [&::-webkit-slider-thumb]:appearance-none [&::-webkit-slider-thumb]:bg-[#555555]"
      />
      <button aria-label="拡大"><Icon w={8} h={8}><path d="M0 4h8M4 0v8" stroke="#555" strokeWidth="2" /></Icon></button>
      <span className="w-[52px] pr-2 text-right">100%</span>
    </footer>
  );
}

export default function App() {
  return (
    <div className="flex h-screen flex-col overflow-hidden bg-[#e6e6e6] font-['Noto_Sans','Noto_Sans_CJK_JP',sans-serif] text-[12px] leading-4 [font-feature-settings:'palt']">
      <Header />
      <div className="flex h-[94px] shrink-0 border-b border-[#d2d2d2] bg-[#f1f1f1] pt-1 pb-[3px]">
        <ClipboardGroup />
        <FontGroup />
        <AlignGroup />
        <NumberGroup />
        <StyleGroup />
        <CellGroup />
        <EditGroup />
        <button aria-label="リボンを折りたたむ" className="mt-auto mr-[10px] mb-px ml-auto">
          <Icon w={9} h={6}><path d="M1 5l3.500-3.500L8 5" stroke="#666" strokeWidth="1.800" /></Icon>
        </button>
      </div>
      <FormulaBar />
      <main className="flex min-h-0 flex-1 font-['Noto_Sans_CJK_JP',sans-serif] [font-feature-settings:normal]">
        <div className="relative min-w-0 flex-1 overflow-hidden border-r border-[#9b9b9b]">
          <SheetTable />
          <Memos />
        </div>
        <VerticalScroll />
      </main>
      <SheetTabs />
      <StatusBar />
    </div>
  );
}
